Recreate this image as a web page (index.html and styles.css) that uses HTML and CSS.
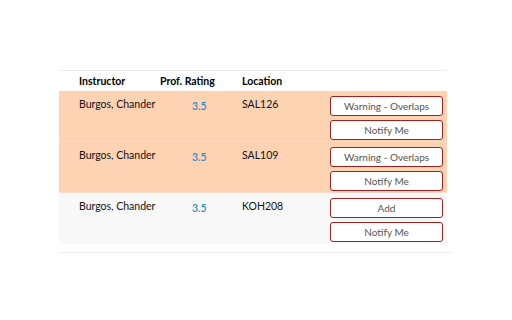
FILE: index.html
```html
<!DOCTYPE html>
<html lang="en">
<head>
    <meta charset="UTF-8">
    <meta name="viewport" content="width=device-width, initial-scale=1.0">
    <title>Sections</title>
    <link rel="stylesheet" href="styles.css">
</head>
<body>
    <div class="sections">
        <div class="table">
            <div class="row head">
                <div class="cell">Instructor</div>
                <div class="cell">Prof. Rating</div>
                <div class="cell">Location</div>
                <div class="cell"></div>
            </div>
            <div class="row conflict">
                <div class="cell">Burgos, Chander</div>
                <div class="cell rating">3.5</div>
                <div class="cell">SAL126</div>
                <div class="cell actions">
                    <button class="action-button">Warning - Overlaps</button>
                    <button class="action-button">Notify Me</button>
                </div>
            </div>
            <div class="row conflict">
                <div class="cell">Burgos, Chander</div>
                <div class="cell rating">3.5</div>
                <div class="cell">SAL109</div>
                <div class="cell actions">
                    <button class="action-button">Warning - Overlaps</button>
                    <button class="action-button">Notify Me</button>
                </div>
            </div>
            <div class="row open">
                <div class="cell">Burgos, Chander</div>
                <div class="cell rating">3.5</div>
                <div class="cell">KOH208</div>
                <div class="cell actions">
                    <button class="action-button">Add</button>
                    <button class="action-button">Notify Me</button>
                </div>
            </div>
        </div>
        <div class="divider"></div>
    </div>
</body>
</html>
```

FILE: styles.css
```css
* {
    margin: 0;
    padding: 0;
    box-sizing: border-box;
}

body {
    font-family: 'Lato', 'Noto Sans', sans-serif;
    background: #fff;
    color: #111;
    font-size: 10.5px;
}

.sections {
    padding: 70px 0 0 59px;
}

.table {
    width: 388px;
    border-top: 1px solid #ececec;
    border-top-right-radius: 3px;
}

.row {
    display: grid;
    grid-template-columns: 81px 82px 88px 113px;
    padding: 0 4px 0 20px;
}

.head {
    height: 20px;
    align-items: center;
    font-weight: 700;
    color: #000;
}

.conflict {
    background: #fed3b4;
    border-bottom: 1px solid #f6dccb;
    padding-top: 5px;
    padding-bottom: 1px;
}

.open {
    background: #f8f8f8;
    padding-top: 5px;
    padding-bottom: 2px;
}

.conflict .cell,
.open .cell {
    padding-top: 2px;
}

.rating {
    color: #2f8cc4;
    padding-left: 32px;
    font-weight: 600;
}

.conflict .rating,
.open .rating {
    padding-top: 4px;
}

.actions {
    display: flex;
    flex-direction: column;
    gap: 4px;
}

.conflict .actions,
.open .actions {
    padding-top: 0;
}

.action-button {
    height: 20px;
    background: #fff;
    border: 1px solid #a81d1d;
    border-radius: 3px;
    color: #555;
    font-family: 'Lato', 'Noto Sans', sans-serif;
    font-size: 10px;
}

.divider {
    width: 393px;
    margin-top: 8px;
    border-top: 1px solid #ececec;
}
```
